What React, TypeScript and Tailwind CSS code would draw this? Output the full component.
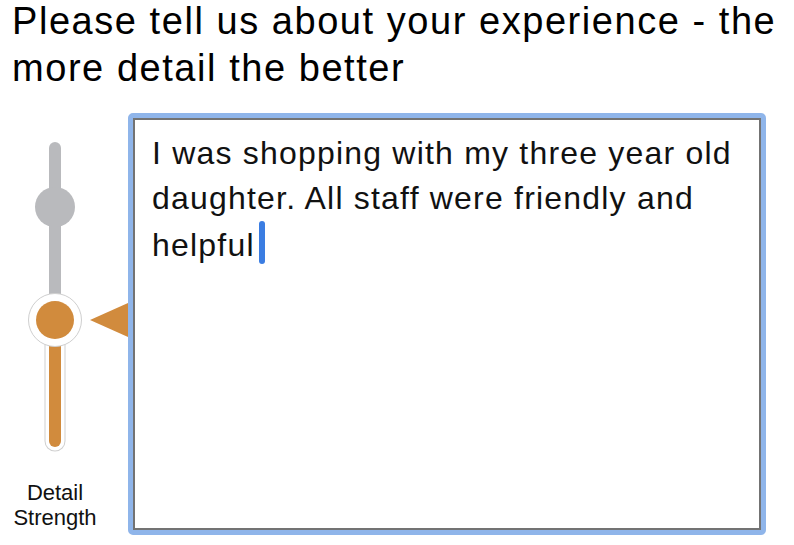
import React from 'react';

const font = { fontFamily: '"Liberation Sans", Arial, sans-serif' };

const DetailSlider: React.FC = () => (
  <svg width="128" height="345" viewBox="0 0 128 345" className="block">
    {/* upper (inactive) track */}
    <line x1="55" y1="35" x2="55" y2="200" stroke="#b9babd" strokeWidth="12" strokeLinecap="round" />
    <circle cx="55" cy="94" r="20" fill="#b9babd" />
    {/* lower (active) track */}
    <line x1="55" y1="207" x2="55" y2="328" stroke="#cfcfcf" strokeWidth="21" strokeLinecap="round" />
    <line x1="55" y1="207" x2="55" y2="328" stroke="#ffffff" strokeWidth="19" strokeLinecap="round" />
    <line x1="55" y1="207" x2="55" y2="328" stroke="#d18b3d" strokeWidth="12" strokeLinecap="round" />
    {/* handle */}
    <circle cx="55" cy="207" r="26.5" fill="#ffffff" stroke="#cfcfcf" strokeWidth="1" />
    <circle cx="55" cy="207" r="19" fill="#d18b3d" />
    {/* pointer */}
    <polygon points="90,207 128,190 128,224" fill="#d18b3d" />
  </svg>
);

const App: React.FC = () => {
  return (
    <div className="w-[794px] h-[545px] bg-white overflow-hidden text-black" style={font}>
      <h1 className="-mt-[2px] pl-[12px] pr-[4px] text-[38px] leading-[47px] tracking-[1.55px] font-normal">
        Please tell us about your experience - the more detail the better
      </h1>

      <div className="flex mt-[21px]">
        <div className="w-[128px] shrink-0 flex flex-col">
          <DetailSlider />
          <div className="w-[110px] mt-[22px] text-center text-[22px] leading-[25px] text-[#111]">
            Detail
            <br />
            Strength
          </div>
        </div>

        <div className="w-[638px] h-[422px] rounded-[5px] border-[5px] border-[#8fb5ea]">
          <div className="h-full border-2 border-[#737373] bg-white pl-[17px] pt-[11px] pr-[10px]">
            <p className="text-[32px] leading-[45px] tracking-[1.2px] text-[#111]">
              I was shopping with my three year old daughter. All staff were friendly and helpful
              <span className="inline-block align-[-8px] ml-[4px] w-[6px] h-[43px] rounded-full bg-[#3b7de2]" />
            </p>
          </div>
        </div>
      </div>
    </div>
  );
};

export default App;
